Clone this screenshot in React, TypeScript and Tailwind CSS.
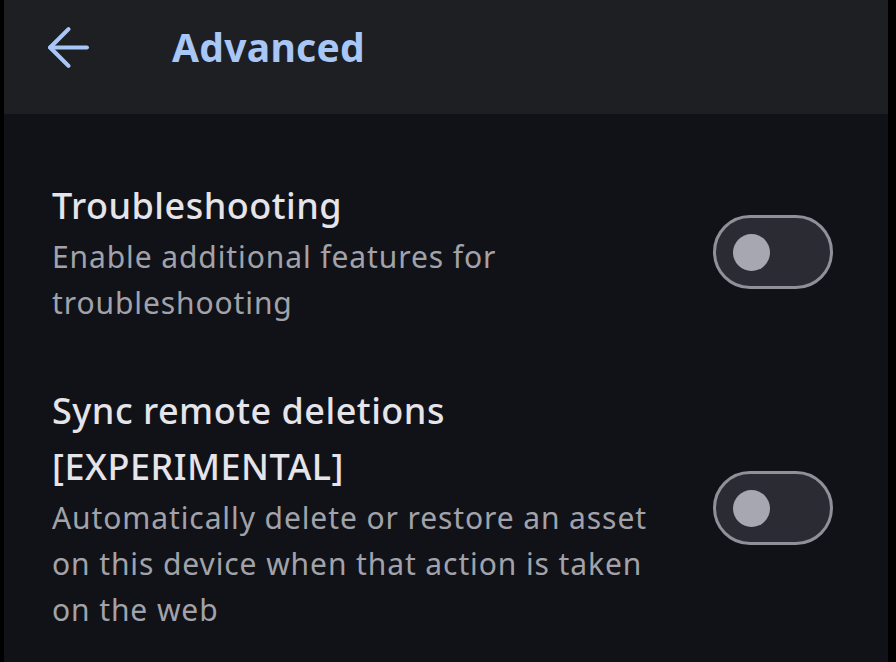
import { ArrowLeft } from "lucide-react";

type SettingRowProps = {
  title: string[];
  description: string[];
};

function Toggle() {
  return (
    <div className="flex h-[74px] w-[120px] shrink-0 items-center rounded-full border-[3px] border-[#8f9099] bg-[#2b2c33] pl-[17px]">
      <div className="h-[37px] w-[37px] rounded-full bg-[#a6a7b0]" />
    </div>
  );
}

function SettingRow({ title, description }: SettingRowProps) {
  return (
    <div className="flex items-center justify-between">
      <div className="flex flex-col">
        <div className="text-[36px] leading-[56px] font-medium tracking-[0.5px] text-[#e4e4ea]">
          {title.map((line) => (
            <div key={line}>{line}</div>
          ))}
        </div>
        <div className="text-[30px] leading-[46px] tracking-[0.9px] text-[#a2a3aa]">
          {description.map((line) => (
            <div key={line}>{line}</div>
          ))}
        </div>
      </div>
      <Toggle />
    </div>
  );
}

export default function App() {
  return (
    <div
      className="flex h-[662px] w-[896px] overflow-hidden bg-black"
      style={{ fontFamily: '"Noto Sans", "Open Sans", sans-serif' }}
    >
      <div className="ml-[4px] flex w-[884px] flex-col bg-[#111217]">
        <header className="flex h-[114px] shrink-0 items-center bg-[#1e1f23] pb-[20px]">
          <ArrowLeft className="ml-[33px] h-[63px] w-[63px] text-[#a8c7f7]" strokeWidth={1.6} />
          <h1 className="ml-[72px] text-[39px] font-bold tracking-[0.3px] text-[#a8c7f7]">
            Advanced
          </h1>
        </header>

        <main className="flex flex-col gap-[57px] pt-[64px] pr-[55px] pl-[48px]">
          <SettingRow
            title={["Troubleshooting"]}
            description={["Enable additional features for", "troubleshooting"]}
          />
          <SettingRow
            title={["Sync remote deletions", "[EXPERIMENTAL]"]}
            description={[
              "Automatically delete or restore an asset",
              "on this device when that action is taken",
              "on the web",
            ]}
          />
        </main>
      </div>
    </div>
  );
}
